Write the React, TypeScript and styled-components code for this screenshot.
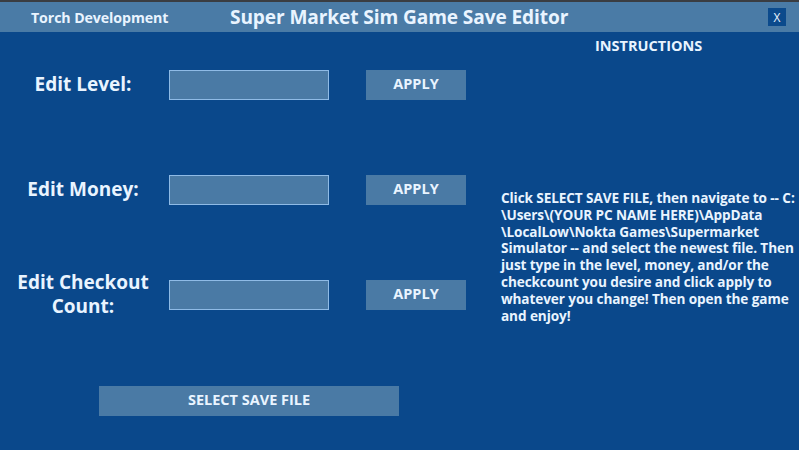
import React from "react";
import styled, { createGlobalStyle } from "styled-components";

const Global = createGlobalStyle`
  html, body { margin: 0; padding: 0; background: #0a488b; }
  body { width: 799px; height: 450px; overflow: hidden; font-family: "Open Sans", "Noto Sans", sans-serif; }
  * { box-sizing: border-box; }
`;

const Window = styled.div`
  width: 799px;
  height: 450px;
  background: #0a488b;
  border-top: 2px solid #3a3d42;
  color: #e9f4ff;
  font-weight: 700;
  display: flex;
  flex-direction: column;
  overflow: hidden;
`;

const TitleBar = styled.div`
  height: 30px;
  background: #4a7ba6;
  display: flex;
  align-items: center;
  padding-left: 31px;
  padding-right: 13px;
`;

const Brand = styled.div`
  font-size: 14.2px;
  width: 199px;
  letter-spacing: -0.1px;
`;

const Title = styled.div`
  font-size: 19.1px;
  flex: 1;
  letter-spacing: -0.1px;
`;

const CloseButton = styled.div`
  width: 18px;
  height: 18px;
  background: #0b4a8c;
  display: flex;
  align-items: center;
  justify-content: center;
  font-size: 12px;
  font-weight: 400;
  color: #e9f4ff;
`;

const Body = styled.div`
  flex: 1;
  display: flex;
`;

const LeftPane = styled.div`
  width: 501px;
  display: flex;
  flex-direction: column;
  padding-top: 38px;
`;

const FieldRow = styled.div<{ $gap: number }>`
  display: grid;
  grid-template-columns: 169px 160px 137px;
  grid-template-rows: 30px;
  align-items: center;
  margin-bottom: ${(p) => p.$gap}px;
`;

const Label = styled.div`
  font-size: 19px;
  text-align: center;
  line-height: 24px;
  white-space: nowrap;
  padding-bottom: 2px;
  padding-right: 3px;
`;

const Input = styled.input`
  width: 160px;
  height: 30px;
  background: #4a7aa5;
  border: 1px solid #8fbbe6;
  outline: none;
  color: #e9f4ff;
  font-family: inherit;
`;

const Button = styled.div<{ $w: number }>`
  width: ${(p) => p.$w}px;
  height: 30px;
  background: #4a7aa5;
  display: flex;
  align-items: center;
  justify-content: center;
  font-size: 14.5px;
  padding-bottom: 3px;
`;

const ApplyCell = styled.div`
  display: flex;
  justify-content: flex-end;
`;

const SelectRow = styled.div`
  padding-left: 99px;
  margin-top: 76px;
`;

const RightPane = styled.div`
  flex: 1;
  display: flex;
  flex-direction: column;
  padding-top: 4px;
`;

const InstructionsHead = styled.div`
  font-size: 14.5px;
  padding-left: 94px;
  line-height: 20px;
`;

const InstructionsText = styled.div`
  margin-top: 134px;
  font-size: 13.6px;
  line-height: 16.8px;
  white-space: nowrap;
  letter-spacing: -0.1px;
`;

const lines = [
  "Click SELECT SAVE FILE, then navigate to -- C:",
  "\\Users\\(YOUR PC NAME HERE)\\AppData",
  "\\LocalLow\\Nokta Games\\Supermarket",
  "Simulator -- and select the newest file. Then",
  "just type in the level, money, and/or the",
  "checkcount you desire and click apply to",
  "whatever you change! Then open the game",
  "and enjoy!",
];

export default function App() {
  return (
    <>
      <Global />
      <Window>
        <TitleBar>
          <Brand>Torch Development</Brand>
          <Title>Super Market Sim Game Save Editor</Title>
          <CloseButton>X</CloseButton>
        </TitleBar>
        <Body>
          <LeftPane>
            <FieldRow $gap={75}>
              <Label>Edit Level:</Label>
              <Input />
              <ApplyCell>
                <Button $w={100}>APPLY</Button>
              </ApplyCell>
            </FieldRow>
            <FieldRow $gap={75}>
              <Label>Edit Money:</Label>
              <Input />
              <ApplyCell>
                <Button $w={100}>APPLY</Button>
              </ApplyCell>
            </FieldRow>
            <FieldRow $gap={0}>
              <Label>
                Edit Checkout
                <br />
                Count:
              </Label>
              <Input />
              <ApplyCell>
                <Button $w={100}>APPLY</Button>
              </ApplyCell>
            </FieldRow>
            <SelectRow>
              <Button $w={300}>SELECT SAVE FILE</Button>
            </SelectRow>
          </LeftPane>
          <RightPane>
            <InstructionsHead>INSTRUCTIONS</InstructionsHead>
            <InstructionsText>
              {lines.map((l, i) => (
                <div key={i}>{l}</div>
              ))}
            </InstructionsText>
          </RightPane>
        </Body>
      </Window>
    </>
  );
}
